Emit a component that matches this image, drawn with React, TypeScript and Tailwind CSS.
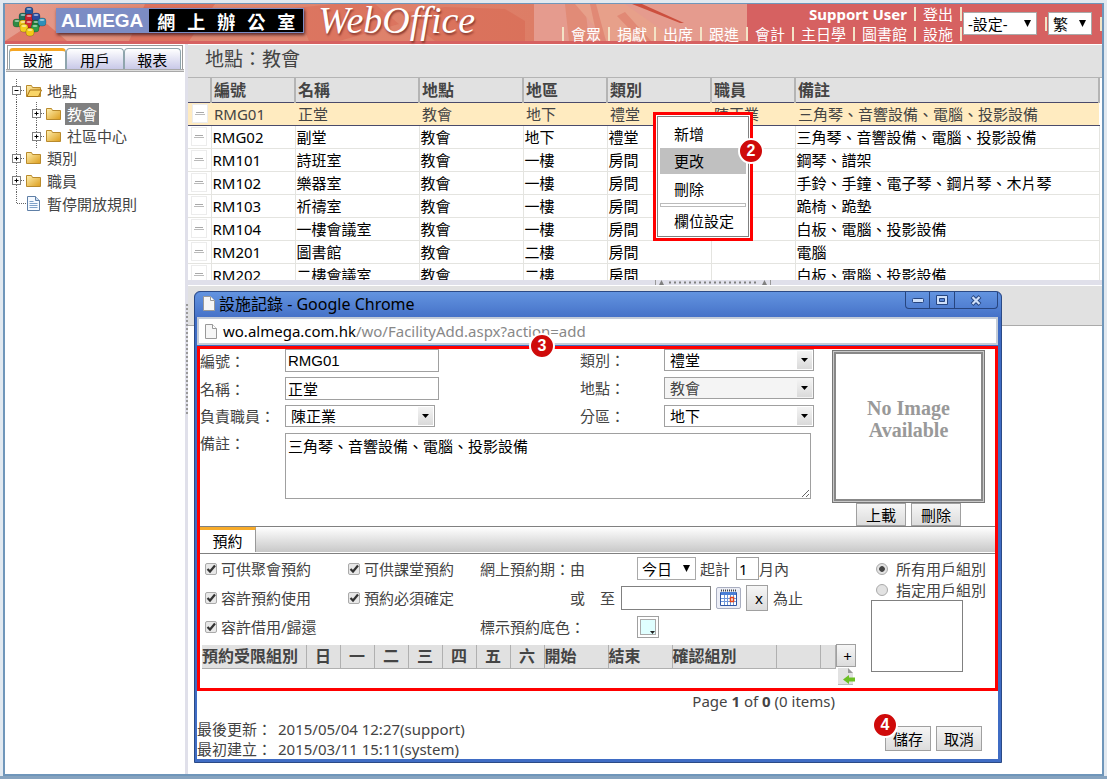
import { useState } from 'react';
import type { ReactNode } from 'react';
import clsx from 'clsx';

const navItems = ['會眾', '捐獻', '出席', '跟進', '會計', '主日學', '圖書館', '設施'];

const rooms = [
  { code: 'RMG01', name: '正堂', place: '教會', area: '地下', type: '禮堂', staff: '陳正業', note: '三角琴、音響設備、電腦、投影設備' },
  { code: 'RMG02', name: '副堂', place: '教會', area: '地下', type: '禮堂', staff: '', note: '三角琴、音響設備、電腦、投影設備' },
  { code: 'RM101', name: '詩班室', place: '教會', area: '一樓', type: '房間', staff: '', note: '鋼琴、譜架' },
  { code: 'RM102', name: '樂器室', place: '教會', area: '一樓', type: '房間', staff: '', note: '手鈴、手鐘、電子琴、鋼片琴、木片琴' },
  { code: 'RM103', name: '祈禱室', place: '教會', area: '一樓', type: '房間', staff: '', note: '跪椅、跪墊' },
  { code: 'RM104', name: '一樓會議室', place: '教會', area: '一樓', type: '房間', staff: '', note: '白板、電腦、投影設備' },
  { code: 'RM201', name: '圖書館', place: '教會', area: '二樓', type: '房間', staff: '', note: '電腦' },
  { code: 'RM202', name: '二樓會議室', place: '教會', area: '二樓', type: '房間', staff: '', note: '白板、電腦、投影設備' },
];

function Logo() {
  const beads = [
    [17, 5, '#24549c'], [11, 11, '#1f6f5c'], [17, 12, '#c9202f'], [24, 11, '#2a4aa0'],
    [5, 17, '#2f8a45'], [11, 18, '#f0c419'], [17, 18, '#d42a32'], [24, 18, '#1f7a3c'], [30, 16, '#2f8fb8'],
    [12, 22, '#f5cf1c'], [23, 22, '#2d9a48'], [18, 26, '#f3c916'],
  ] as const;
  return (
    <svg width="36" height="32" viewBox="0 0 36 32" aria-hidden="true">
      {beads.map(([x, y, fill]) => (
        <g key={`${x}-${y}`}>
          <rect x={x - 4} y={y - 4} width="8" height="8" rx="3" fill={fill} stroke="#00000055" strokeWidth="0.6" />
          <ellipse cx={x} cy={y - 2} rx="2.5" ry="1" fill="#ffffff88" />
        </g>
      ))}
    </svg>
  );
}

function HeaderArt() {
  return (
    <svg className="absolute left-0 top-0" width="742" height="37" viewBox="0 0 742 37" aria-hidden="true">
      <defs>
        <linearGradient id="art" x1="0" x2="1" y1="0" y2="0">
          <stop offset="0" stopColor="#e59c8e" />
          <stop offset="0.25" stopColor="#e08a74" />
          <stop offset="1" stopColor="#dd7d66" />
        </linearGradient>
      </defs>
      <rect width="529" height="37" fill="url(#art)" />
      <rect x="529" width="213" height="37" fill="#e59b8e" />
      <path d="M0 37 20 24 42 20 62 37zM140 0h70l-26 37h-60z" fill="#d8604f" opacity="0.6" />
      <path d="M290 4 330 0h40l24 20-60 17h-30z" fill="#d96a55" opacity="0.55" />
      <path d="M395 9 440 3l60 2 20 12v20h-90z" fill="#d8634e" opacity="0.45" />
      <path d="M560 0h20l4 37h-20z" fill="#dd8168" opacity="0.6" />
      <path d="M570 0h50l52 37h-70z" fill="#e7a08a" />
      <path d="M585 0h6l10 37h-8zM620 8l26 29h-10L612 12z" fill="#dc7160" opacity="0.5" />
      <path d="M627 0h10l42 19h-4z" fill="#cc4f3e" />
    </svg>
  );
}

function Separator() {
  return <span className="h-3.5 w-0.5 bg-[#f3e3c6]" />;
}

function Header() {
  return (
    <header className="relative flex h-10 border-b-3 border-[#d66161] bg-[#d66161] text-white">
      <HeaderArt />
      <div className="relative flex items-start gap-2 pl-[7px]">
        <div className="pt-0.5"><Logo /></div>
        <div className="mt-1 flex h-[25px] items-center bg-black shadow-[1px_2px_3px_#5a2a2a]">
          <span className="flex h-full items-center border border-[#7c8cc4] bg-[#7c8cc4] px-1 font-['Liberation_Sans'] text-[19px] font-bold">
            ALMEGA
          </span>
          <span className="flex h-full items-center gap-3 border border-[#7c8cc4] px-2 font-['Noto_Sans_CJK_TC'] text-lg leading-5 font-bold">
            {['網', '上', '辦', '公', '室'].map((c) => <span key={c}>{c}</span>)}
          </span>
        </div>
        <span className="pl-1.5 font-['Liberation_Serif'] text-[38px] leading-8 italic [text-shadow:1px_2px_2px_#8a3a30]">
          WebOffice
        </span>
      </div>
      <div className="relative ml-auto flex items-start">
        <div className="flex flex-col items-end">
          <div className="flex h-5 items-center gap-[7px]">
            <b>Support User</b>
            <Separator />
            <a href="#logout">登出</a>
            <Separator />
          </div>
          <nav className="flex h-5 items-center gap-[7px]">
            <Separator />
            {navItems.map((item) => (
              <span key={item} className="flex items-center gap-[7px]">
                <a href={`#${item}`}>{item}</a>
                <Separator />
              </span>
            ))}
          </nav>
        </div>
        <div className="flex items-center gap-px pt-2 pl-px">
          <MenuSelect label="設定" className="mr-[7px] w-[74px]" value="-設定-" />
          <Separator />
          <MenuSelect label="語言" className="mr-[7px] w-11" value="繁" />
          <Separator />
        </div>
      </div>
    </header>
  );
}

function MenuSelect({ label, value, className }: { label: string; value: string; className: string }) {
  return (
    <span className={clsx('relative flex h-[23px]', className)}>
      <select aria-label={label} className="w-full appearance-none border border-[#a9a9a9] bg-white pl-1 leading-5 text-black">
        <option>{value}</option>
      </select>
      <svg className="pointer-events-none absolute top-2 right-1.5" width="7" height="7" viewBox="0 0 7 7" aria-hidden="true">
        <path d="M0 0h7L3.5 7z" fill="#000" />
      </svg>
    </span>
  );
}

function FormSelect({ id, value, disabled }: { id: string; value: string; disabled?: boolean }) {
  return (
    <span className="relative flex h-[22px] w-[150px]">
      <select
        id={id}
        disabled={disabled}
        className="w-full appearance-none border border-[#a0a0a0] bg-white pl-[5px] leading-5 text-black disabled:bg-[#f4f4f4] disabled:text-[#444]"
      >
        <option>{value}</option>
      </select>
      <span className="pointer-events-none absolute top-0.5 right-0.5 flex h-[18px] w-[15px] items-center justify-center bg-linear-to-b from-[#f4f4f4] to-[#dadada]">
        <svg width="7" height="4" viewBox="0 0 7 4" aria-hidden="true"><path d="M0 0h7L3.5 4z" fill="#000" /></svg>
      </span>
    </span>
  );
}

function FolderIcon({ open }: { open?: boolean }) {
  return (
    <svg width="16" height="14" viewBox="0 0 16 14" aria-hidden="true">
      <defs>
        <linearGradient id="folder" x1="0" y1="0" x2="1" y2="1">
          <stop offset="0" stopColor="#fff0b0" />
          <stop offset="1" stopColor="#dc9d1c" />
        </linearGradient>
      </defs>
      <path d="M.5 12.5v-11h5l1 2h8v9z" fill="url(#folder)" stroke="#b98a2c" />
      {open && <path d="M1 12.5 4 6h11.5l-3 6.5z" fill="#f9d568" stroke="#a87416" />}
    </svg>
  );
}

function DocIcon() {
  return (
    <svg width="13" height="15" viewBox="0 0 13 15" aria-hidden="true">
      <path d="M.5.5h8l4 4v10H.5z" fill="#f4f9ff" stroke="#5f7fa6" />
      <path d="M8.500.5v4h4" fill="#c9dcf0" stroke="#5f7fa6" />
      <path d="M2.500 5.500h4M2.500 7.500h8M2.500 9.500h8M2.500 11.500h8" stroke="#7da0c8" />
    </svg>
  );
}

function PageIcon() {
  return (
    <svg width="12" height="15" viewBox="0 0 12 15" aria-hidden="true">
      <path d="M.5.5h7l4 4v10H.5z" fill="#f6f6f6" stroke="#999" />
      <path d="M7.500.5v4h4" fill="#fff" stroke="#999" />
    </svg>
  );
}

function Toggle({ open }: { open?: boolean }) {
  return (
    <svg width="13" height="23" viewBox="0 0 13 23" aria-hidden="true">
      <rect x=".5" y="7.500" width="8" height="8" fill="#fff" stroke="#808080" />
      <path d={open ? 'M2.500 11.500h4' : 'M2.500 11.500h4M4.500 9.500v4'} stroke="#000" />
      <path d="M9 11.500h4M4.500 0v7M4.500 16v7" stroke="#666" strokeDasharray="1 1" />
    </svg>
  );
}

function TreeLine() {
  return <span className="h-[23px] w-[15px] border-l border-dotted border-[#555]" />;
}

function Tree() {
  return (
    <ul className="pt-[7px] pl-[7px] text-[#444]">
      <li className="flex h-[23px] items-center gap-px"><Toggle open /><FolderIcon open /><span className="pl-1">地點</span></li>
      <li className="flex h-[23px] items-center gap-px pl-1">
        <TreeLine /><Toggle /><FolderIcon />
        <span className="ml-0.5 bg-[#808080] px-0.5 leading-[22px] text-white">教會</span>
      </li>
      <li className="flex h-[22px] items-center gap-px pl-1"><TreeLine /><Toggle /><FolderIcon /><span className="pl-1">社區中心</span></li>
      <li className="flex h-[22px] items-center gap-px"><Toggle /><FolderIcon /><span className="pl-1">類別</span></li>
      <li className="flex h-[23px] items-center gap-px"><Toggle /><FolderIcon /><span className="pl-1">職員</span></li>
      <li className="flex h-[23px] items-center gap-px">
        <svg width="14" height="23" viewBox="0 0 14 23" aria-hidden="true">
          <path d="M4.500 0v11.500H14" fill="none" stroke="#666" strokeDasharray="1 1" />
        </svg>
        <DocIcon />
        <span className="pl-1.5">暫停開放規則</span>
      </li>
    </ul>
  );
}

function Sidebar() {
  const [tab, setTab] = useState('設施');
  return (
    <aside className="w-[180px] shrink-0 bg-white">
      <div className="mx-0.5 mt-px flex h-6 border border-b-0 border-[#999] px-px pt-0.5">
        {['設施', '用戶', '報表'].map((t) => (
          <button
            key={t}
            onClick={() => setTab(t)}
            className={clsx(
              'flex-1 rounded-t border-x leading-[18px] text-black',
              t === tab
                ? 'border-t-3 border-[#8fa5ad] border-t-[#f5a623] bg-white'
                : 'border-t border-[#8fa5ad] bg-linear-to-b from-white to-[#c9c9e8] pt-0.5',
            )}
          >
            {t}
          </button>
        ))}
      </div>
      <div className="mx-px h-[3px] border-y border-[#a8a8a8] bg-[#ddd]" />
      <Tree />
    </aside>
  );
}

function RoomTable() {
  return (
    <div className="h-[202px] overflow-hidden pr-0.5">
      <table className="w-full table-fixed border-collapse bg-white text-left text-black">
        <colgroup>
          <col className="w-[23px]" />
          <col className="w-[84px]" />
          <col className="w-[124px]" />
          <col className="w-[104px]" />
          <col className="w-[84px]" />
          <col className="w-[104px]" />
          <col className="w-[84px]" />
          <col />
        </colgroup>
        <thead>
          <tr className="h-6 bg-[#e1e1e1] text-base leading-5 text-[#444]">
            {['', '編號', '名稱', '地點', '地區', '類別', '職員', '備註'].map((h, i) => (
              <th key={i} className="border-r-2 border-[#b4b4b4] p-0 pl-0.5">{h}</th>
            ))}
          </tr>
        </thead>
        <tbody>
          {rooms.map((r, i) => {
            const cell = i === 0
              ? 'border-y border-[#4a4a6a]'
              : 'border-r border-b border-[#e4e4e0]';
            return (
              <tr key={r.code} className={clsx('h-[23px]', i === 0 && 'bg-[#ffebc0] text-[#444]')}>
                <td className={clsx('p-0', cell)}>
                  <span className="mx-auto flex h-[19px] w-4 flex-col items-center justify-center gap-px border border-[#ececec] bg-white">
                    <span className="h-px w-2 bg-[#aaa]" />
                    <span className="h-px w-2.5 bg-[#bbb]" />
                  </span>
                </td>
                {[r.code, r.name, r.place, r.area, r.type, r.staff, r.note].map((v, j) => (
                  <td
                    key={j}
                    className={clsx('overflow-hidden p-0 leading-[22px] whitespace-nowrap', cell, i === 0 ? 'pl-[3px]' : 'pl-px')}
                  >
                    {v}
                  </td>
                ))}
              </tr>
            );
          })}
        </tbody>
      </table>
    </div>
  );
}

function Badge({ n, className }: { n: number; className: string }) {
  return (
    <span
      className={clsx(
        "absolute flex size-[26px] items-center justify-center rounded-full border-2 border-white bg-[#cf0a0a] font-['Liberation_Sans'] text-base leading-none font-bold text-white",
        className,
      )}
    >
      {n}
    </span>
  );
}

function ContextMenu() {
  return (
    <div className="absolute top-[112px] left-[653px] w-[100px] border-3 border-[#f00] bg-white p-px text-black">
      <div className="flex flex-col border border-[#808080] p-0.5">
        <button className="h-[29px] pl-3.5 text-left">新增</button>
        <button className="h-[26px] bg-[#c0c0c0] pl-3.5 text-left">更改</button>
        <button className="h-[29px] pl-3.5 text-left">刪除</button>
        <hr className="h-1 border border-[#bbb]" />
        <button className="h-[27px] pl-3.5 text-left whitespace-nowrap">欄位設定</button>
      </div>
      <Badge n={2} className="top-[23px] -right-[14px]" />
    </div>
  );
}

function Check({ label }: { label: string }) {
  return (
    <label className="flex items-center gap-1">
      <span className="relative flex size-3">
        <input type="checkbox" defaultChecked className="peer size-3 appearance-none rounded-xs border border-[#aaa] bg-[#e8e8e8]" />
        <svg className="pointer-events-none absolute inset-0 hidden peer-checked:block" width="12" height="12" viewBox="0 0 12 12" aria-hidden="true">
          <path d="M2.500 6 5 8.500 10 2.500" fill="none" stroke="#333" strokeWidth="2.200" />
        </svg>
      </span>
      {label}
    </label>
  );
}

function Radio({ label, checked }: { label: string; checked?: boolean }) {
  return (
    <label className="flex h-[21px] items-center gap-2">
      <input
        type="radio"
        name="group"
        defaultChecked={checked}
        className="size-3 appearance-none rounded-full border border-[#aaa] bg-[#e2e2e2] checked:bg-[radial-gradient(circle,#444_35%,#e2e2e2_45%)]"
      />
      {label}
    </label>
  );
}

function GreyButton({ children, className }: { children: ReactNode; className?: string }) {
  return (
    <button className={clsx('border border-[#a0a0a0] bg-linear-to-b from-[#f6f6f6] to-[#dcdcdc] text-black', className)}>
      {children}
    </button>
  );
}

function Field({ id, label, children }: { id: string; label: string; children: ReactNode }) {
  return (
    <div className="flex items-center">
      <label htmlFor={id} className="w-[85px] shrink-0">{label}</label>
      {children}
    </div>
  );
}

function RecordFields() {
  const input = "h-[23px] w-[154px] border border-[#a0a0a0] px-0.5 font-['Liberation_Sans','Noto_Sans_CJK_TC',sans-serif] text-black";
  return (
    <div className="flex">
      <div className="w-[632px]">
        <div className="flex">
          <div className="flex w-[380px] flex-col gap-[5px]">
            <Field id="code" label="編號："><input id="code" defaultValue="RMG01" className={input} /></Field>
            <Field id="name" label="名稱："><input id="name" defaultValue="正堂" className={input} /></Field>
            <Field id="staff" label="負責職員："><FormSelect id="staff" value="陳正業" /></Field>
          </div>
          <div className="grid grid-cols-[84px_150px] items-center gap-y-1.5">
            <label htmlFor="type">類別：</label><FormSelect id="type" value="禮堂" />
            <label htmlFor="place">地點：</label><FormSelect id="place" value="教會" disabled />
            <label htmlFor="area">分區：</label><FormSelect id="area" value="地下" />
          </div>
        </div>
        <div className="mt-1.5 flex">
          <label htmlFor="note" className="w-[85px]">備註：</label>
          <textarea
            id="note"
            defaultValue="三角琴、音響設備、電腦、投影設備"
            className="h-[66px] w-[526px] border border-[#a0a0a0] px-0.5 leading-6 text-black"
          />
        </div>
      </div>
      <div className="flex flex-col items-center pt-px">
        <div className="flex size-[153px] border border-[#777] bg-[#c8c8c8] p-px">
          <div className="flex flex-1 items-center justify-center border-2 border-[#888] bg-white pb-4 text-center font-['Liberation_Serif'] text-xl leading-[22px] font-bold text-[#999]">
            No Image<br />Available
          </div>
        </div>
        <div className="flex gap-[5px]">
          <GreyButton className="h-[23px] w-[50px]">上載</GreyButton>
          <GreyButton className="h-[23px] w-[50px]">刪除</GreyButton>
        </div>
      </div>
    </div>
  );
}

function CalendarIcon() {
  return (
    <svg width="17" height="17" viewBox="0 0 17 17" aria-hidden="true">
      <path d="M.5 3.500h16v13H.5z" fill="#fff" stroke="#2f55a4" />
      <path d="M1 3h15v3H1z" fill="#4a7fd6" />
      <path d="M1 1.500h15" stroke="#444" strokeWidth="2" strokeDasharray="1 1" />
      <path d="M1 9.500h15M1 12.500h15M4.500 6v10M7.500 6v10M10.500 6v10M13.500 6v10" stroke="#6f97da" />
      <path d="M10.500 8.500h3v4h-3z" fill="#fff" stroke="#e0441c" strokeWidth="1.500" />
    </svg>
  );
}

function BookingOptions() {
  return (
    <div className="flex h-[90px] justify-between pl-[5px]">
      <div className="flex">
        <div className="flex w-[143px] flex-col">
          <div className="flex h-[29px] items-center"><Check label="可供聚會預約" /></div>
          <div className="flex h-[29px] items-center"><Check label="容許預約使用" /></div>
          <div className="flex h-[29px] items-center"><Check label="容許借用/歸還" /></div>
        </div>
        <div className="flex w-[132px] flex-col">
          <div className="flex h-[29px] items-center"><Check label="可供課堂預約" /></div>
          <div className="flex h-[29px] items-center"><Check label="預約必須確定" /></div>
        </div>
        <div className="flex flex-col">
          <div className="flex h-[29px] items-center">
            <span className="w-[157px]">網上預約期：由</span>
            <MenuSelect label="由" className="w-[59px]" value="今日" />
            <label htmlFor="months" className="pr-1.5 pl-1">起計</label>
            <input id="months" defaultValue="1" className="h-[23px] w-[23px] border border-[#a0a0a0] px-0.5 text-black" />
            月內
          </div>
          <div className="flex h-[29px] items-center">
            <span className="w-[120px] pl-[90px]">或</span>
            <label htmlFor="until" className="w-[21px]">至</label>
            <input id="until" className="h-6 w-[90px] border border-[#808080]" />
            <button aria-label="日曆" className="ml-[5px] flex h-[22px] w-[25px] items-center justify-center rounded-xs border border-[#a9aec0] bg-[#eceef6]">
              <CalendarIcon />
            </button>
            <GreyButton className="mx-[5px] h-[26px] w-[22px] pl-1">x</GreyButton>
            為止
          </div>
          <div className="flex h-[29px] items-center">
            <span className="w-[157px]">標示預約底色：</span>
            <button aria-label="底色" className="flex size-[22px] border border-[#a0a0a0] bg-white p-0.5">
              <span className="flex flex-1 items-end justify-end self-stretch border border-[#aaa] bg-[#e0ffff]">
                <svg width="5" height="3" viewBox="0 0 5 3" aria-hidden="true"><path d="M0 0h5L2.500 3z" fill="#222" /></svg>
              </span>
            </button>
          </div>
        </div>
      </div>
      <div className="w-[124px] pt-1">
        <div className="pl-[5px]">
          <Radio label="所有用戶組別" checked />
          <Radio label="指定用戶組別" />
        </div>
        <select size={4} aria-label="用戶組別" className="h-[72px] w-[92px] border border-[#808080] bg-white" />
      </div>
    </div>
  );
}

const limitColumns = [
  { label: '預約受限組別', width: 'w-[104px]' },
  { label: '日', width: 'w-[34px]' },
  { label: '一', width: 'w-[34px]' },
  { label: '二', width: 'w-[34px]' },
  { label: '三', width: 'w-[34px]' },
  { label: '四', width: 'w-[34px]' },
  { label: '五', width: 'w-[34px]' },
  { label: '六', width: 'w-[34px]' },
  { label: '開始', width: 'w-[64px]' },
  { label: '結束', width: 'w-[64px]' },
  { label: '確認組別', width: 'w-[104px]' },
  { label: '', width: 'w-[44px]' },
  { label: '', width: 'w-[15px]' },
];

function LimitTable() {
  return (
    <div className="flex h-[44px] items-start pl-0.5">
      <table className="mt-px w-[633px] table-fixed border-collapse">
        <thead>
          <tr className="h-[23px] bg-[#e1e1e1] text-base leading-5">
            {limitColumns.map((c, i) => (
              <th
                key={i}
                className={clsx(
                  'border-r border-b border-[#b0b0b0] p-0 whitespace-nowrap',
                  c.width,
                  c.label.length > 1 ? 'text-left' : 'text-center',
                )}
              >
                {c.label}
              </th>
            ))}
          </tr>
        </thead>
      </table>
      <div className="flex flex-col items-center">
        <GreyButton className="h-[23px] w-5 pl-1 leading-5">+</GreyButton>
        <button aria-label="匯入">
          <svg width="18" height="18" viewBox="0 0 18 18" aria-hidden="true">
            <path d="M1 1h10l5 5v11H1z" fill="#e2e2e2" />
            <path d="M11 1v5h5z" fill="#999" />
            <path d="M1 17.500h15" stroke="#bbb" />
            <path d="M6 12.500 12 8v2.500h6v4h-6V17z" fill="#6cc024" />
          </svg>
        </button>
      </div>
    </div>
  );
}

function RecordWindow() {
  return (
    <section className="absolute top-[291px] left-[194px] w-[808px] rounded-t-md border border-[#2b4a86] bg-[#3f6cc4] pr-[3px] pb-[3px] pl-0.5 text-[#444]">
      <div className="-mr-[3px] -ml-0.5 flex h-[25px] items-start rounded-t-md bg-linear-to-b from-[#6394e0] to-[#4672c8] pr-[3px] pl-2">
        <div className="flex h-[23px] items-center gap-1 text-base text-black">
          <PageIcon />
          <span>設施記錄 - Google Chrome</span>
        </div>
        <div className="ml-auto flex h-[17px] rounded-b border border-t-0 border-[#27457f] text-[#27457f]">
          <button aria-label="最小化" className="flex w-6 items-center justify-center border-r border-[#27457f]">
            <svg width="12" height="5" viewBox="0 0 12 5" aria-hidden="true"><rect x=".5" y=".5" width="11" height="4" rx="1" fill="#cfe0fa" stroke="currentColor" /></svg>
          </button>
          <button aria-label="最大化" className="flex w-[25px] items-center justify-center border-r border-[#27457f]">
            <svg width="12" height="10" viewBox="0 0 12 10" aria-hidden="true">
              <path d="M.5.5h11v9H.5z" fill="#cfe0fa" stroke="currentColor" />
              <path d="M3.500 3.500h5v3h-5z" fill="#5b88d8" stroke="currentColor" />
            </svg>
          </button>
          <button aria-label="關閉" className="flex w-[42px] items-center justify-center">
            <svg width="12" height="11" viewBox="0 0 12 11" aria-hidden="true">
              <path d="M2 1.500 10 9.500M10 1.500 2 9.500" stroke="currentColor" strokeWidth="4" />
              <path d="M2.500 2 9.500 9M9.500 2 2.500 9" stroke="#cfe0fa" strokeWidth="2.200" />
            </svg>
          </button>
        </div>
      </div>
      <div className="flex h-7 items-center gap-1.5 border-2 border-[#c4ccd8] bg-white px-1.5 text-[#888]">
        <PageIcon />
        <span><span className="text-black">wo.almega.com.hk</span>/wo/FacilityAdd.aspx?action=add</span>
      </div>
      <div className="bg-white">
        <div className="relative mt-px border-3 border-[#f00]">
          <RecordFields />
          <div className="h-7 border-y border-[#808080]">
            <div className="flex h-[25px] bg-linear-to-b from-white to-[#c8c8c8]">
              <button className="w-14 border-t-3 border-r border-t-[#f7ab2a] border-r-[#999] bg-white text-black">預約</button>
            </div>
          </div>
          <BookingOptions />
          <LimitTable />
          <Badge n={3} className="-top-[16px] left-[329px]" />
        </div>
        <div className="flex h-5 items-center justify-end pr-[163px]">
          <span>Page <b>1</b> of <b>0</b> (0 items)</span>
        </div>
        <div className="flex items-end justify-between pt-2 pr-4">
          <dl className="grid grid-cols-[81px_auto] leading-5">
            <dt>最後更新：</dt><dd>2015/05/04 12:27(support)</dd>
            <dt>最初建立：</dt><dd>2015/03/11 15:11(system)</dd>
          </dl>
          <div className="relative flex gap-[5px] pb-2">
            <GreyButton className="h-[25px] w-[46px]">儲存</GreyButton>
            <GreyButton className="h-[25px] w-[46px]">取消</GreyButton>
            <Badge n={4} className="-top-[14px] -left-[13px]" />
          </div>
        </div>
      </div>
    </section>
  );
}

function Splitter() {
  return (
    <div className="flex h-[6px] shrink-0 items-center justify-center gap-2 border-b border-white bg-[#e0e0ea] pl-[136px]">
      <svg width="116" height="5" viewBox="0 0 116 5" aria-hidden="true">
        <path d="M.5 0v5M115.500 0v5" stroke="#999" />
        <path d="M4 5 6.500 0 9 5zM107 5l2.500-5 2.500 5z" fill="#808080" />
        <path d="M14 2.500h88" stroke="#808080" strokeWidth="2" strokeDasharray="2 3" />
      </svg>
    </div>
  );
}

export default function App() {
  return (
    <div className="relative flex min-h-screen flex-col border-b-3 border-[#86a3bf] bg-[#e2e9f0] px-[3px] pt-[3px] font-['Noto_Sans','Noto_Sans_CJK_TC',sans-serif] text-[15px] leading-5">
      <div className="flex flex-1 flex-col border-x-2 border-t border-b-2 border-[#6f96ba] bg-white">
        <Header />
        <div className="flex flex-1">
          <Sidebar />
          <div className="flex w-[3px] flex-col items-center bg-[#e0e0ea] pt-[260px]">
            <span className="h-[110px] border-l-2 border-dotted border-[#999]" />
          </div>
          <main className="flex min-w-0 flex-1 flex-col bg-white pt-px">
            <h1 className="flex h-[33px] shrink-0 items-center border-b border-[#b4b4b4] bg-[#e1e1e1] pb-1 pl-[17px] text-[19px] text-[#444]">
              地點：教會
            </h1>
            <RoomTable />
            <Splitter />
            <div className="h-10 border-b border-[#aaa] bg-[#e1e1e1]" />
          </main>
        </div>
      </div>
      <ContextMenu />
      <RecordWindow />
    </div>
  );
}
